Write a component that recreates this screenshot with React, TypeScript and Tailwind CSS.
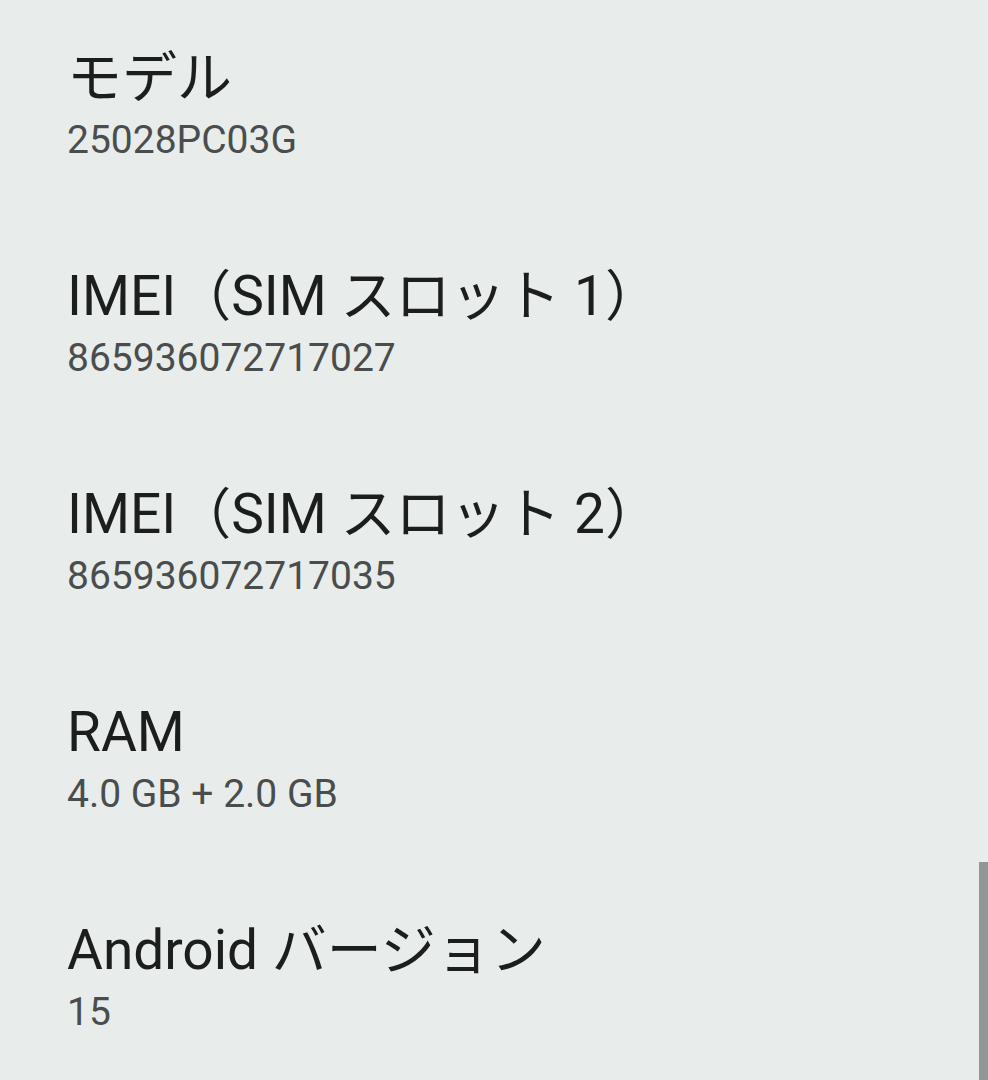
const items = [
  { title: "モデル", value: "25028PC03G" },
  { title: "IMEI（SIM スロット 1）", value: "865936072717027" },
  { title: "IMEI（SIM スロット 2）", value: "865936072717035" },
  { title: "RAM", value: "4.0 GB + 2.0 GB" },
  { title: "Android バージョン", value: "15" },
];

export default function App() {
  return (
    <div
      className="relative h-[1080px] w-[988px] overflow-hidden bg-[#e8ecea]"
      style={{ fontFamily: 'Roboto, "Noto Sans CJK JP", sans-serif' }}
    >
      <div className="flex flex-col">
        {items.map((item) => (
          <div key={item.value} className="h-[218px] px-[67px] pt-[46px]">
            <div className="text-[55px] leading-[64px] text-[#1c1e1e]">{item.title}</div>
            <div className="text-[39px] leading-[61px] text-[#4a4d4d]">{item.value}</div>
          </div>
        ))}
      </div>
      {/* scrollbar */}
      <div className="absolute right-0 top-[862px] h-[218px] w-[9px] bg-[#929795]" />
    </div>
  );
}
